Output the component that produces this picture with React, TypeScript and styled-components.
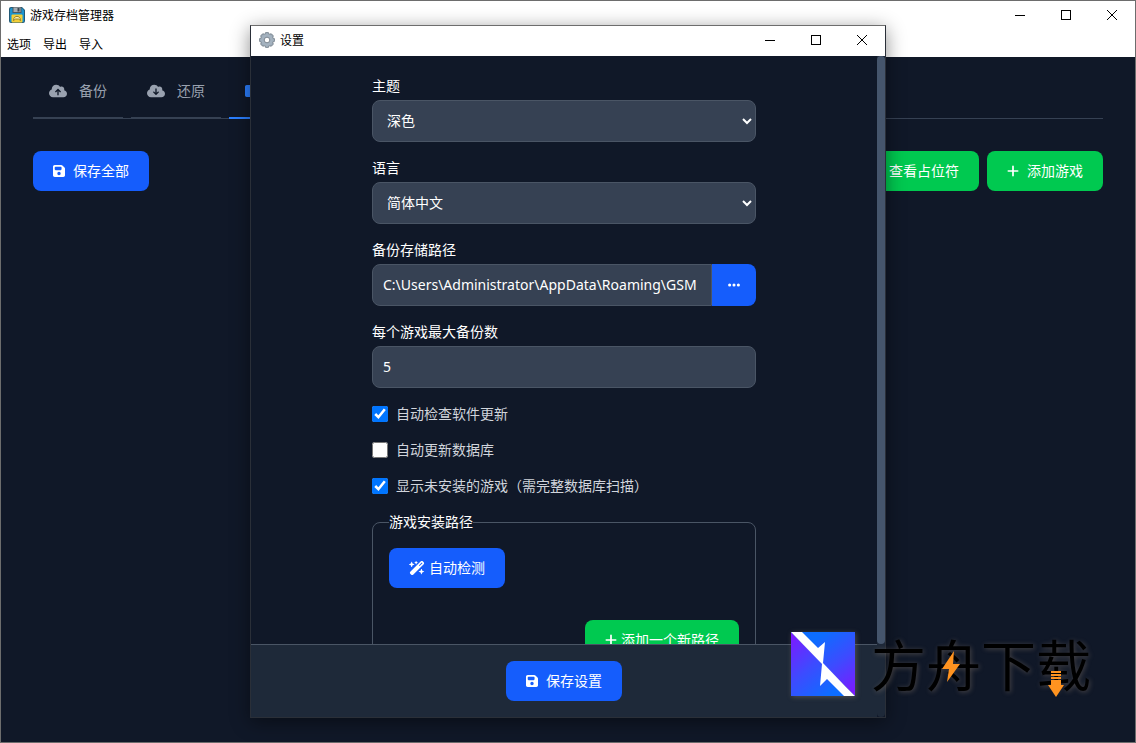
import React from 'react';
import styled, { createGlobalStyle, css } from 'styled-components';
import {
  FaCloudArrowUp,
  FaCloudArrowDown,
  FaFloppyDisk,
  FaPlus,
  FaEllipsis,
  FaWandMagicSparkles,
  FaSquare,
  FaEye,
} from 'react-icons/fa6';

const GlobalStyle = createGlobalStyle`
  * { box-sizing: border-box; }
  html, body, #root { height: 100%; }
  body {
    margin: 0;
    overflow: hidden;
    background: #101828;
    color: #ffffff;
    font-family: "Open Sans", "Noto Sans CJK SC", sans-serif;
    font-size: 14px;
    line-height: 20px;
  }
  button, input, select { font: inherit; }
`;

const MainWindow = styled.div`
  position: relative;
  display: flex;
  flex-direction: column;
  height: 100%;
  min-height: 480px;
  border: 1px solid #6d6d6d;
`;

const TitleBar = styled.header`
  display: flex;
  align-items: center;
  flex: none;
  height: 30px;
  padding: 0 0 2px 8px;
  background: #ffffff;
  color: #000000;
  font-family: "Noto Sans CJK SC", sans-serif;
`;

const TitleText = styled.h1`
  flex: 1;
  margin: 0 0 0 5px;
  font-size: 12px;
  font-weight: 400;
`;

const CaptionButton = styled.button`
  display: flex;
  align-items: center;
  justify-content: center;
  width: 46px;
  height: 28px;
  padding: 0;
  border: 0;
  background: transparent;
  color: #000000;
`;

const MenuBar = styled.nav`
  display: flex;
  flex: none;
  align-items: center;
  gap: 12px;
  height: 26px;
  padding: 0 6px;
  background: #ffffff;
  font-family: "Noto Sans CJK SC", sans-serif;
`;

const MenuItem = styled.button`
  padding: 0;
  border: 0;
  background: transparent;
  color: #000000;
  font-size: 12px;
  line-height: 20px;
`;

const Content = styled.main`
  flex: 1;
  padding: 8px 32px;
`;

const Tabs = styled.div`
  display: flex;
  gap: 8px;
  height: 54px;
  border-bottom: 1px solid #364153;
`;

const Tab = styled.button<{ $active?: boolean }>`
  display: flex;
  align-items: center;
  gap: 12px;
  height: 54px;
  padding: 0 16px;
  border: 0;
  border-bottom: 2px solid ${(p) => (p.$active ? '#2b7fff' : '#364153')};
  background: transparent;
  color: ${(p) => (p.$active ? '#2b7fff' : '#99a1af')};
`;

const narrowIcon = css`
  width: 12px;
  height: 14px;
`;

const SaveIcon = styled(FaFloppyDisk)`${narrowIcon}`;
const PlusIcon = styled(FaPlus)`${narrowIcon}`;
const CustomIcon = styled(FaSquare)`${narrowIcon}`;

const Toolbar = styled.div`
  display: flex;
  align-items: center;
  gap: 8px;
  margin-top: 32px;
`;

const Spacer = styled.div`
  flex: 1;
`;

const Button = styled.button<{ $green?: boolean; $gap?: number }>`
  display: flex;
  align-items: center;
  gap: ${(p) => p.$gap ?? 8}px;
  height: 40px;
  padding: 0 20px;
  border: 0;
  border-radius: 8px;
  background: ${(p) => (p.$green ? '#00c950' : '#155dfc')};
  color: #ffffff;
  white-space: nowrap;
`;

const Overlay = styled.div`
  position: absolute;
  inset: 24px 0;
  display: flex;
  justify-content: center;
  pointer-events: none;
`;

const Dialog = styled.section`
  display: flex;
  flex-direction: column;
  width: 636px;
  max-width: 100%;
  border: 1px solid #2a2f38;
  border-top-color: #6d6d6d;
  background: #101828;
  box-shadow: 0 4px 18px rgba(0, 0, 0, 0.45);
  pointer-events: auto;
`;

const DialogBody = styled.div`
  display: flex;
  flex: 1;
  min-height: 0;
`;

const Scroller = styled.div`
  display: flex;
  flex-direction: column;
  flex: 1;
  min-width: 0;
  overflow-y: auto;
  scrollbar-width: none;
`;

const Rail = styled.div`
  flex: none;
  width: 8px;
  border-radius: 0 0 4px 4px;
  background: #1e2939;
`;

const Thumb = styled.div`
  height: 89%;
  border-radius: 4px;
  background: #45556c;
`;

const Form = styled.form`
  display: flex;
  flex-direction: column;
  flex: none;
  gap: 16px;
  width: 100%;
  max-width: 384px;
  margin: 0 auto;
  padding: 20px 0 16px;
`;

const Field = styled.div`
  display: flex;
  flex-direction: column;
  gap: 4px;
`;

const control = css`
  width: 100%;
  height: 42px;
  padding: 0 10px 2px;
  border: 1px solid #4a5565;
  border-radius: 8px;
  background: #364153;
  color: #ffffff;
  outline: none;
`;

const Select = styled.select`
  ${control}
`;

const Input = styled.input<{ $joined?: boolean }>`
  ${control}
  font-family: "Noto Sans", "Noto Sans CJK SC", sans-serif;
  ${(p) => p.$joined && 'flex: 1; min-width: 0; border-radius: 8px 0 0 8px;'}
`;

const Joined = styled.div`
  display: flex;
`;

const BrowseButton = styled.button`
  display: flex;
  align-items: center;
  justify-content: center;
  width: 44px;
  height: 42px;
  padding: 0;
  border: 0;
  border-radius: 0 8px 8px 0;
  background: #155dfc;
  color: #ffffff;
`;

const CheckRow = styled.label`
  display: flex;
  align-items: center;
  gap: 8px;
  height: 20px;
  color: #d1d5dc;
`;

const Checkbox = styled.input`
  width: 16px;
  height: 16px;
  margin: 0;
  accent-color: #0075ff;
`;

const Group = styled.fieldset`
  min-width: 0;
  margin: 0;
  padding: 16px;
  border: 1px solid #4a5565;
  border-radius: 8px;
`;

const Legend = styled.legend`
  padding: 0;
`;

const GroupEnd = styled.div`
  display: flex;
  justify-content: flex-end;
  margin-top: 32px;
`;

const Footer = styled.footer`
  position: sticky;
  bottom: 0;
  display: flex;
  flex: none;
  justify-content: center;
  padding: 16px;
  border-top: 1px solid #4a5565;
  background: #1e2939;
`;

const Watermark = styled.div`
  position: absolute;
  right: 44px;
  bottom: 46px;
  display: flex;
  align-items: flex-start;
  gap: 16px;
  pointer-events: none;
`;

const BrandLogo = styled.svg`
  display: block;
  box-shadow: 1px 1px 5px rgba(160, 140, 120, 0.4);
`;

const BrandName = styled.div`
  position: relative;
  color: #000000;
  font-family: "Noto Sans CJK SC", sans-serif;
  font-size: 55px;
  line-height: 60px;
  text-shadow: 1px 1px 5px rgba(160, 140, 120, 0.4);
`;

const BrandMarks = styled.svg`
  position: absolute;
  left: 0;
  top: 0;
`;

function WindowControls() {
  return (
    <>
      <CaptionButton type="button" aria-label="最小化">
        <svg width="10" height="10" shapeRendering="crispEdges">
          <path d="M0 5.5h10" stroke="currentColor" />
        </svg>
      </CaptionButton>
      <CaptionButton type="button" aria-label="最大化">
        <svg width="10" height="10" shapeRendering="crispEdges">
          <rect x="0.5" y="0.5" width="9" height="9" fill="none" stroke="currentColor" />
        </svg>
      </CaptionButton>
      <CaptionButton type="button" aria-label="关闭">
        <svg width="12" height="12">
          <path d="M1 1l10 10M11 1L1 11" stroke="currentColor" strokeWidth="1" />
        </svg>
      </CaptionButton>
    </>
  );
}

function AppIcon() {
  return (
    <svg width="16" height="16" viewBox="0 0 16 16">
      <path d="M2 0h11l3 3v11a2 2 0 0 1-2 2H2a2 2 0 0 1-2-2V2a2 2 0 0 1 2-2z" fill="#235a76" />
      <path d="M2 1h11l2 2.500V14a1 1 0 0 1-1 1H2a1 1 0 0 1-1-1V2z" fill="#1b93cf" />
      <rect x="3.500" y="0" width="9" height="6" fill="#4b5960" />
      <rect x="4.500" y="0.500" width="7" height="4.500" fill="#a5abb0" />
      <rect x="8.500" y="1" width="2" height="3.500" fill="#3a4750" />
      <rect x="2.500" y="7.500" width="11" height="8" rx="1" fill="#f2cf38" />
      <path d="M4.500 13.500c0-5.500 7-5.500 7 0l-2-1.500h-3z" fill="#fff3b0" stroke="#7c6a1e" strokeWidth="0.800" />
    </svg>
  );
}

function GearIcon() {
  return (
    <svg width="16" height="16" viewBox="0 0 16 16">
      <g fill="#9dabb8" stroke="#6d7883" strokeWidth="0.800">
        {[0, 45, 90, 135, 180, 225, 270, 315].map((a) => (
          <rect key={a} x="6" y="0.500" width="4" height="4" rx="1.200" transform={`rotate(${a} 8 8)`} />
        ))}
      </g>
      <circle cx="8" cy="8" r="4.500" fill="none" stroke="#a4b2bf" strokeWidth="3" />
      <circle cx="8" cy="8" r="2.800" fill="#ffffff" stroke="#6d7883" strokeWidth="0.900" />
    </svg>
  );
}

export default function App() {
  return (
    <>
      <GlobalStyle />
      <MainWindow>
        <TitleBar>
          <AppIcon />
          <TitleText>游戏存档管理器</TitleText>
          <WindowControls />
        </TitleBar>
        <MenuBar>
          <MenuItem type="button">选项</MenuItem>
          <MenuItem type="button">导出</MenuItem>
          <MenuItem type="button">导入</MenuItem>
        </MenuBar>
        <Content>
          <Tabs>
            <Tab type="button"><FaCloudArrowUp size={18} />备份</Tab>
            <Tab type="button"><FaCloudArrowDown size={18} />还原</Tab>
            <Tab type="button" $active><CustomIcon />自定义</Tab>
          </Tabs>
          <Toolbar>
            <Button type="button"><SaveIcon />保存全部</Button>
            <Spacer />
            <Button type="button" $green><FaEye size={14} />查看占位符</Button>
            <Button type="button" $green><PlusIcon />添加游戏</Button>
          </Toolbar>
        </Content>

        <Overlay>
          <Dialog role="dialog" aria-label="设置">
            <TitleBar>
              <GearIcon />
              <TitleText as="h2">设置</TitleText>
              <WindowControls />
            </TitleBar>
            <DialogBody>
              <Scroller>
                <Form>
                  <Field>
                    <label htmlFor="theme">主题</label>
                    <Select id="theme" defaultValue="dark">
                      <option value="dark">深色</option>
                    </Select>
                  </Field>
                  <Field>
                    <label htmlFor="language">语言</label>
                    <Select id="language" defaultValue="zh">
                      <option value="zh">简体中文</option>
                    </Select>
                  </Field>
                  <Field>
                    <label htmlFor="path">备份存储路径</label>
                    <Joined>
                      <Input id="path" $joined defaultValue="C:\Users\Administrator\AppData\Roaming\GSM" />
                      <BrowseButton type="button" aria-label="浏览"><FaEllipsis size={14} /></BrowseButton>
                    </Joined>
                  </Field>
                  <Field>
                    <label htmlFor="max">每个游戏最大备份数</label>
                    <Input id="max" defaultValue="5" />
                  </Field>
                  <CheckRow><Checkbox type="checkbox" defaultChecked />自动检查软件更新</CheckRow>
                  <CheckRow><Checkbox type="checkbox" />自动更新数据库</CheckRow>
                  <CheckRow><Checkbox type="checkbox" defaultChecked />显示未安装的游戏（需完整数据库扫描）</CheckRow>
                  <Group>
                    <Legend>游戏安装路径</Legend>
                    <Button type="button" $gap={4}><FaWandMagicSparkles size={16} />自动检测</Button>
                    <GroupEnd>
                      <Button type="button" $green $gap={4}><PlusIcon />添加一个新路径</Button>
                    </GroupEnd>
                  </Group>
                </Form>
                <Footer>
                  <Button type="button"><SaveIcon />保存设置</Button>
                </Footer>
              </Scroller>
              <Rail aria-hidden="true">
                <Thumb />
              </Rail>
            </DialogBody>
          </Dialog>
        </Overlay>

        <Watermark>
          <BrandLogo width="64" height="64" viewBox="0 0 64 64">
            <defs>
              <linearGradient id="brandTop" x1="0.400" y1="0.100" x2="1" y2="0.900">
                <stop offset="0" stopColor="#0d6dff" />
                <stop offset="0.500" stopColor="#3d4bff" />
                <stop offset="1" stopColor="#7a1cff" />
              </linearGradient>
              <linearGradient id="brandLow" x1="0" y1="0.100" x2="0.700" y2="0.900">
                <stop offset="0" stopColor="#7a1cff" />
                <stop offset="0.500" stopColor="#3d4bff" />
                <stop offset="1" stopColor="#0d6dff" />
              </linearGradient>
            </defs>
            <path d="M0 0L64 64H0z" fill="url(#brandLow)" />
            <path d="M0 0H64V64z" fill="url(#brandTop)" />
            <path d="M0 0H11L27 16L34 10L32 31L53 53L64 64H53L36 47L29 54L31 32z" fill="#ffffff" />
          </BrandLogo>
          <BrandName>
            方舟下载
            <BrandMarks width="220" height="68" viewBox="0 0 220 68" aria-hidden="true">
              <path d="M83 19L71 37h7l-2 13 13-18h-7z" fill="#ff9320" />
              <path d="M180 39h10v2h-10zM180 42h10v2h-10zM180 45h10v2h-10zM180 48h10v5h3l-8 12-8-12h3z" fill="#ff9320" />
            </BrandMarks>
          </BrandName>
        </Watermark>
      </MainWindow>
    </>
  );
}
